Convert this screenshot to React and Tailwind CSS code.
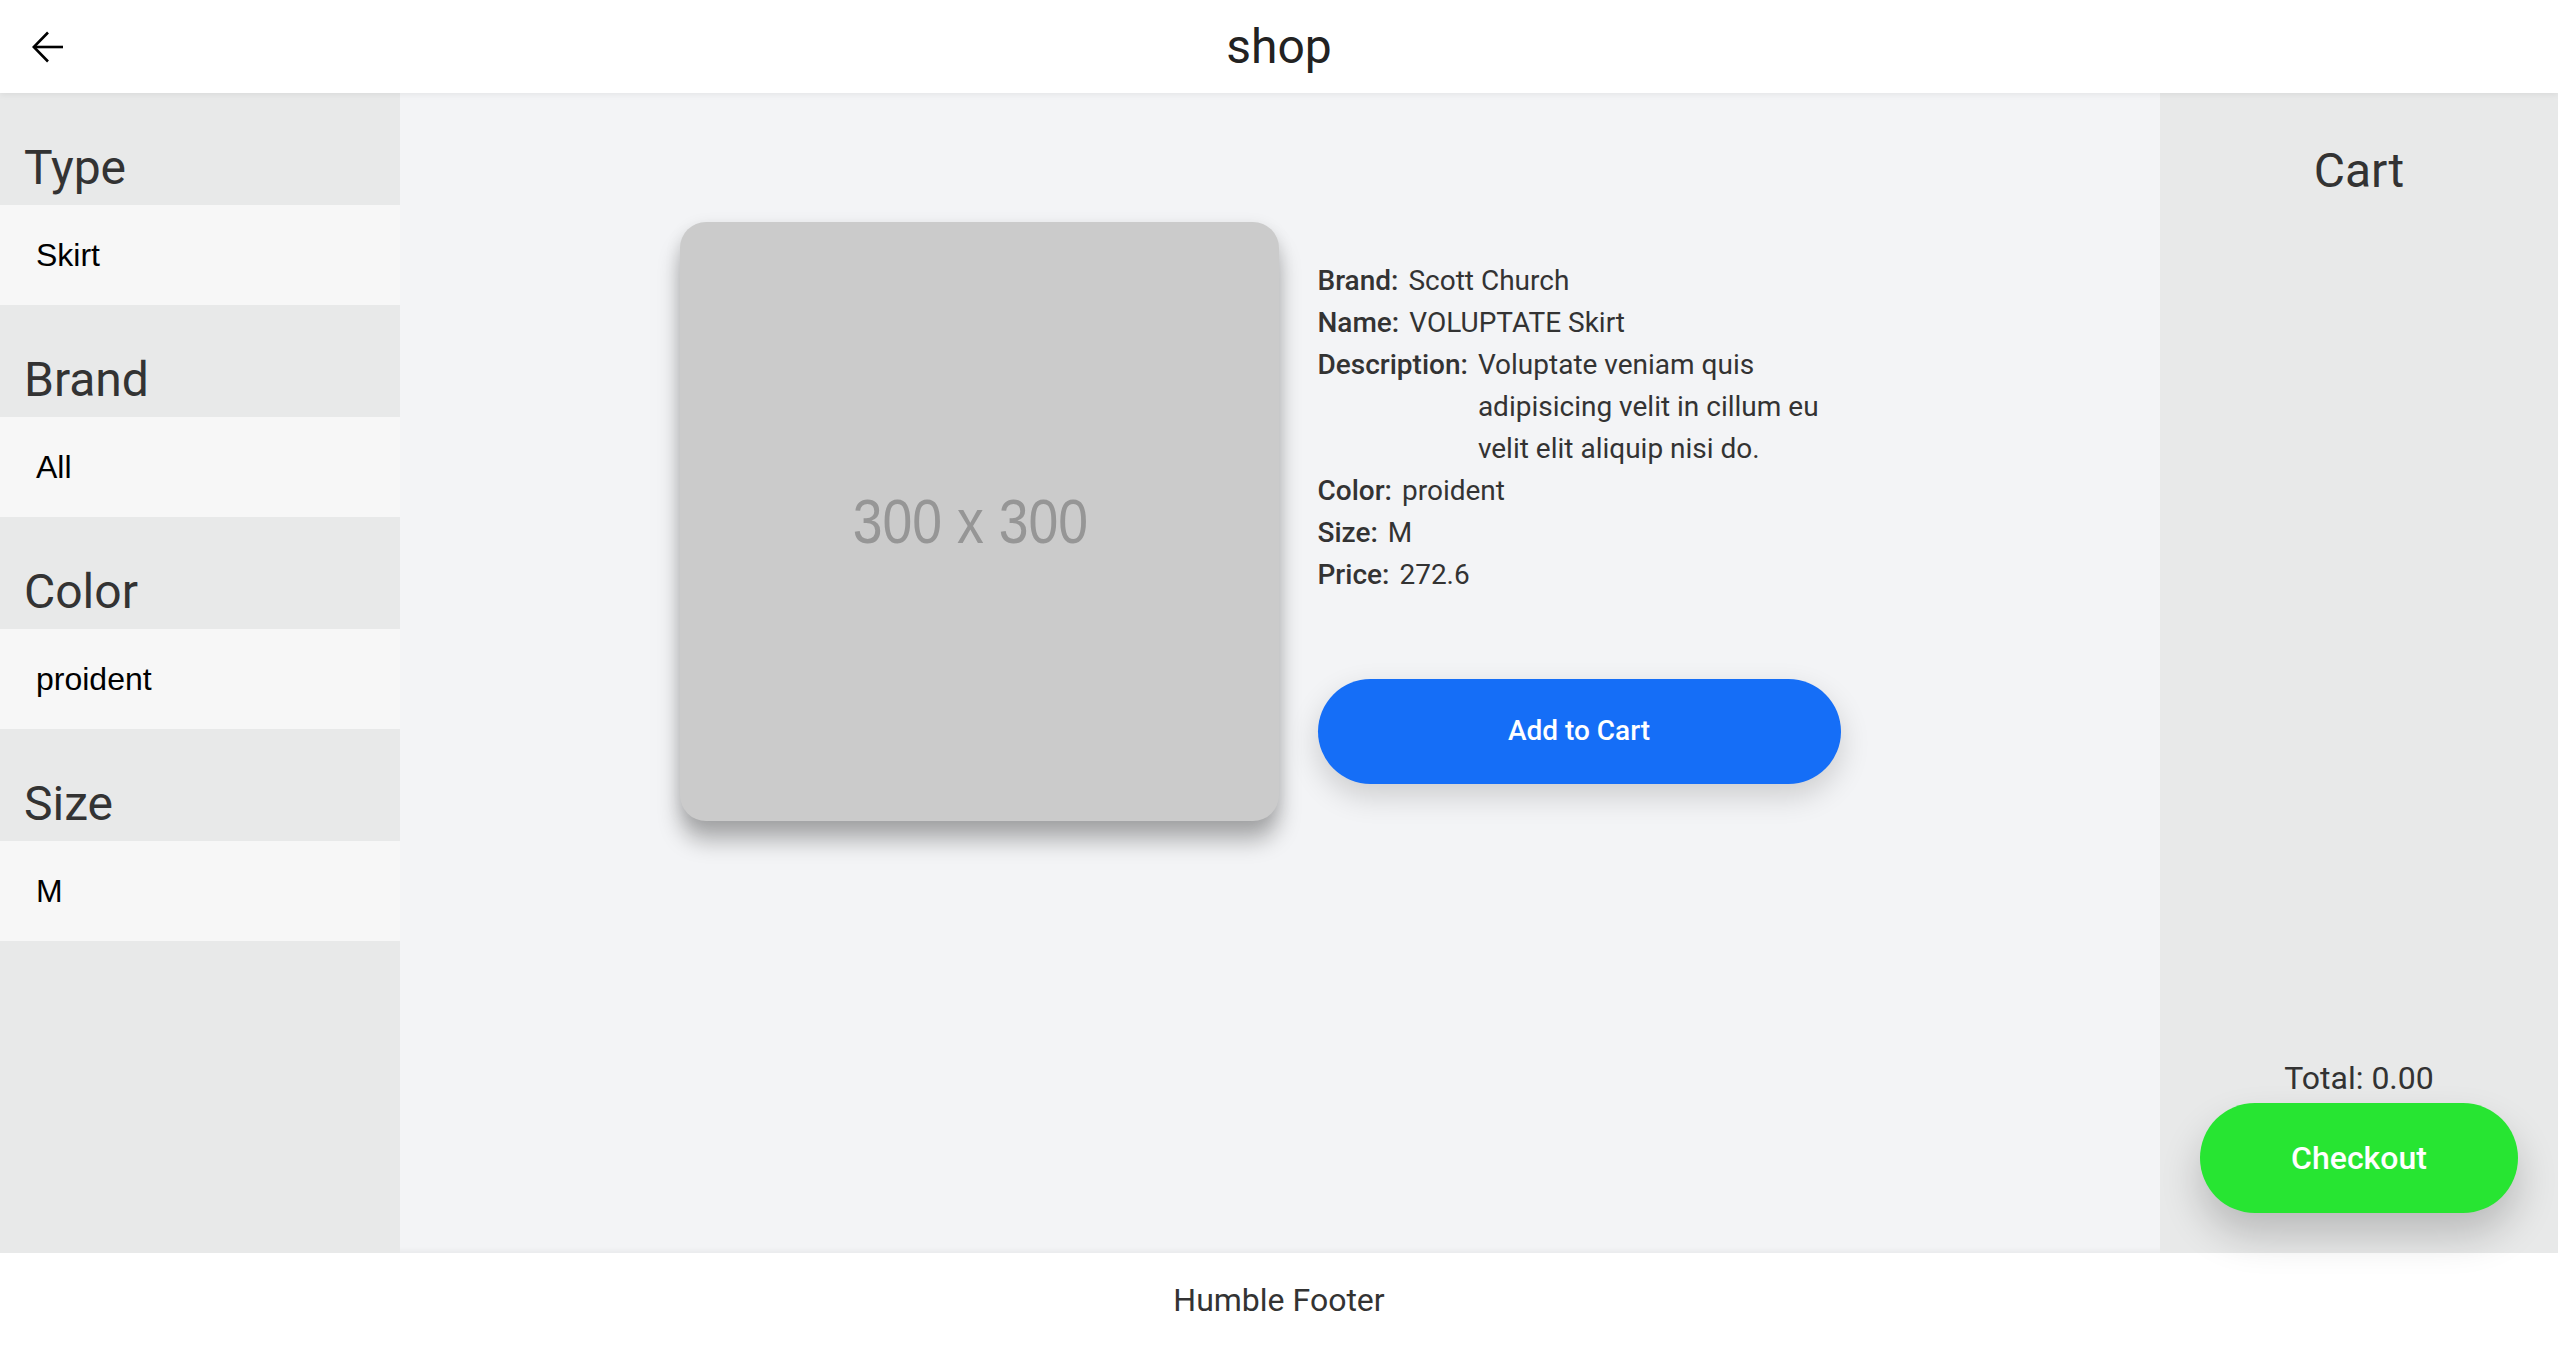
import React from "react";

const filters = [
  { title: "Type", value: "Skirt" },
  { title: "Brand", value: "All" },
  { title: "Color", value: "proident" },
  { title: "Size", value: "M" },
];

const details = [
  { label: "Brand:", value: "Scott Church" },
  { label: "Name:", value: "VOLUPTATE Skirt" },
  { label: "Description:", value: "Voluptate veniam quis adipisicing velit in cillum eu velit elit aliquip nisi do." },
  { label: "Color:", value: "proident" },
  { label: "Size:", value: "M" },
  { label: "Price:", value: "272.6" },
];

const roboto = { fontFamily: "Roboto, 'Liberation Sans', sans-serif" };

export default function App() {
  return (
    <div className="flex h-screen w-full flex-col bg-white font-['Liberation_Sans',Arial,sans-serif]">
      {/* header */}
      <header className="relative z-20 flex h-[93px] shrink-0 items-center bg-white shadow-[0_2px_6px_rgba(0,0,0,0.06)]">
        <button className="ml-[32px] flex h-[32px] w-[32px] items-center justify-center">
          <svg width="32" height="32" viewBox="0 0 32 32" fill="none" stroke="#000" strokeWidth="2.6">
            <path d="M31 16H2" />
            <path d="M16 1.5 1.8 16 16 30.5" />
          </svg>
        </button>
        <h1 className="absolute left-1/2 -translate-x-1/2 text-[48px] leading-[56px] text-[#222]" style={roboto}>
          shop
        </h1>
      </header>

      <div className="flex min-h-0 flex-1">
        {/* filters */}
        <aside className="relative z-10 w-[400px] shrink-0 bg-[#e8e9e9]">
          {filters.map((f) => (
            <div key={f.title}>
              <div className="h-[112px] pl-[24px] pt-[47px] text-[48px] leading-[56px] text-[#333]" style={roboto}>
                {f.title}
              </div>
              <div className="flex h-[100px] items-center bg-[#f7f7f7] pl-[36px] text-[32px] leading-[40px] text-black">
                {f.value}
              </div>
            </div>
          ))}
        </aside>

        {/* product */}
        <main className="flex flex-1 justify-center bg-[#f3f4f6] pr-[40px] pt-[129px]">
          <div className="flex items-center gap-[39px] self-start">
            <div className="flex h-[599px] w-[599px] items-center justify-center rounded-[26px] bg-[#cbcbcb] pr-[18px] shadow-[0_20px_22px_rgba(0,0,0,0.28),0_4px_16px_rgba(0,0,0,0.1)]">
              <span className="inline-block scale-x-[0.85] text-[63px] leading-none text-[#969696]">300 x 300</span>
            </div>
            <div className="w-[523px]" style={roboto}>
              <div className="text-[28px] leading-[42px] text-[#333]">
                {details.map((d) => (
                  <div key={d.label} className="flex">
                    <span className="mr-[10px] shrink-0 font-medium">{d.label}</span>
                    <span>{d.value}</span>
                  </div>
                ))}
              </div>
              <button className="mt-[83px] flex h-[105px] w-full items-center justify-center rounded-full bg-[#156ef7] text-[28px] font-medium text-white shadow-[0_12px_30px_rgba(0,0,0,0.16)]">
                Add to Cart
              </button>
            </div>
          </div>
        </main>

        {/* cart */}
        <aside className="relative z-10 flex w-[398px] shrink-0 flex-col items-center bg-[#e8e9e9] pb-[40px] pt-[50px]" style={roboto}>
          <h2 className="text-[48px] leading-[56px] text-[#333]">Cart</h2>
          <div className="flex-1" />
          <div className="text-[32px] leading-[38px] text-[#333]">Total: 0.00</div>
          <button className="relative z-30 mt-[6px] flex h-[110px] w-[318px] items-center justify-center rounded-full bg-[#27e532] text-[32px] font-medium text-white shadow-[0_22px_40px_rgba(0,0,0,0.2)]">
            Checkout
          </button>
        </aside>
      </div>

      {/* footer */}
      <footer className="flex h-[93px] shrink-0 items-center justify-center bg-white shadow-[0_-2px_6px_rgba(0,0,0,0.05)]" style={roboto}>
        <span className="text-[32px] leading-[38px] text-[#333]">Humble Footer</span>
      </footer>
    </div>
  );
}
